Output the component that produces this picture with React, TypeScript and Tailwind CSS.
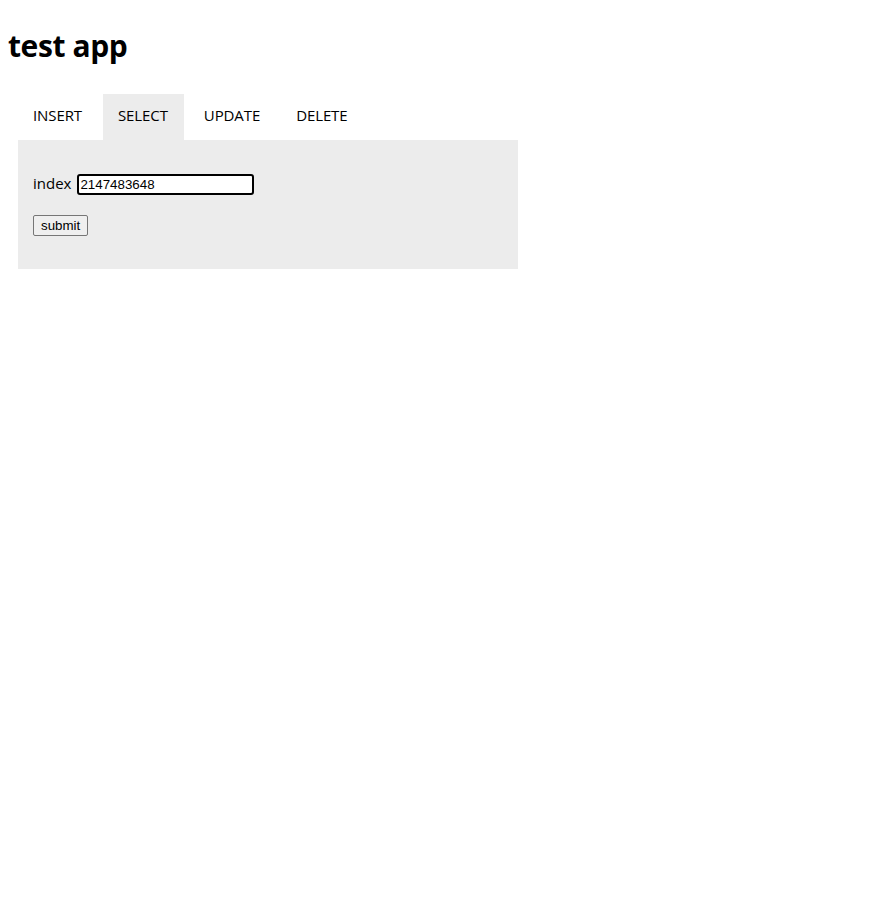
import { useState } from "react";

const tabs = ["INSERT", "SELECT", "UPDATE", "DELETE"];

export default function App() {
  const [active, setActive] = useState("SELECT");
  const [index, setIndex] = useState("2147483648");

  return (
    <div className="min-h-screen bg-white text-black px-2 font-['Open_Sans',sans-serif]">
      <h1 className="text-[30px] font-bold leading-[37px] pt-[27px] tracking-[-0.4px]">test app</h1>

      <div className="ml-[10px] mt-[30px] w-[500px]">
        {/* Tabs */}
        <div className="flex gap-[5px] h-[46px]">
          {tabs.map((t) => (
            <button
              key={t}
              onClick={() => setActive(t)}
              className={
                "pl-[15px] pr-[16px] text-[15px] tracking-[-0.1px] leading-[42px] pb-[4px] " +
                (active === t ? "bg-[#ececec]" : "bg-white")
              }
            >
              {t}
            </button>
          ))}
        </div>

        {/* Panel */}
        <div className="bg-[#ececec] h-[129px] px-[15px] pt-[34px]">
          <div className="flex items-center gap-[6px] h-[21px]">
            <label className="text-[15px] leading-[19px] -mt-[2px]">index</label>
            <input
              autoFocus
              value={index}
              onChange={(e) => setIndex(e.target.value)}
              className="w-[177px] h-[21px] bg-white border-2 border-black rounded-[3px] px-[1px] text-[13.33px] font-['Liberation_Sans',sans-serif] outline-none"
            />
          </div>
          <button className="mt-[20px] h-[21px] px-[7px] bg-[#efefef] border border-[#767676] rounded-[2px] text-[13.33px] font-['Liberation_Sans',sans-serif]">
            submit
          </button>
        </div>
      </div>
    </div>
  );
}
